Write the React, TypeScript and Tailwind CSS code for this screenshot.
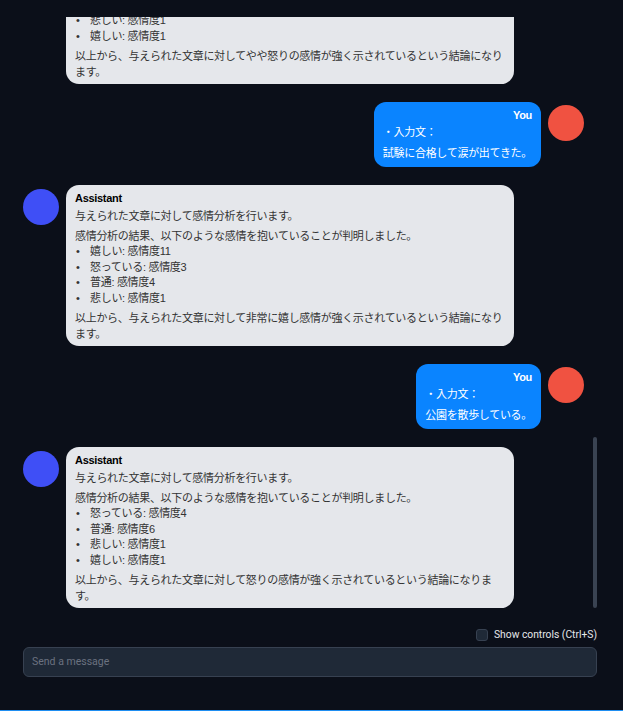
import React from "react";

const FONT = { fontFamily: '"Liberation Sans", "Noto Sans CJK JP", sans-serif' };

type Asst = { items: string[]; conclusion: string };

const AssistantMsg = ({ items, conclusion }: Asst) => (
  <div className="flex items-start gap-[7px]">
    <div className="mt-[4px] h-[36px] w-[36px] shrink-0 rounded-full bg-[#3f4ff6]" />
    <div className="max-w-[448px] rounded-[13px] bg-[#e5e7eb] px-[9px] pt-[5px] pb-[4px] text-[11px] leading-[16px] tracking-[-0.3px] text-[#333]">
      <div className="mb-[2px] font-bold text-black">Assistant</div>
      <p className="mb-[4px]">与えられた文章に対して感情分析を行います。</p>
      <p>感情分析の結果、以下のような感情を抱いていることが判明しました。</p>
      <ul className="mb-[4px]">
        {items.map((t) => (
          <li key={t} className="flex leading-[15.5px]">
            <span className="w-[15px] shrink-0 pl-[1px]">•</span>
            <span>{t}</span>
          </li>
        ))}
      </ul>
      <p>{conclusion}</p>
    </div>
  </div>
);

const UserMsg = ({ text }: { text: string }) => (
  <div className="flex items-start justify-end gap-[7px]">
    <div className="rounded-[12px] bg-[#0a84ff] px-[9px] pt-[5px] pb-[6px] text-[11px] leading-[16px] tracking-[-0.3px] text-white">
      <div className="text-right font-bold">You</div>
      <p className="mt-[1px]">・入力文：</p>
      <p className="mt-[5px]">{text}</p>
    </div>
    <div className="mt-[3px] h-[36px] w-[36px] shrink-0 rounded-full bg-[#f05241]" />
  </div>
);

export default function App() {
  return (
    <div className="flex h-[711px] w-full flex-col bg-[#0b0f19]" style={FONT}>
      <div className="h-[17px] shrink-0" />
      <div className="relative ml-[23px] mr-[26px] flex h-[595px] shrink-0 flex-col justify-end gap-[18px] overflow-hidden pr-[13px] pb-[4px]">
        <AssistantMsg
          items={["怒っている: 感情度5", "普通: 感情度3", "悲しい: 感情度1", "嬉しい: 感情度1"]}
          conclusion="以上から、与えられた文章に対してやや怒りの感情が強く示されているという結論になります。"
        />
        <UserMsg text="試験に合格して涙が出てきた。" />
        <AssistantMsg
          items={["嬉しい: 感情度11", "怒っている: 感情度3", "普通: 感情度4", "悲しい: 感情度1"]}
          conclusion="以上から、与えられた文章に対して非常に嬉し感情が強く示されているという結論になります。"
        />
        <UserMsg text="公園を散歩している。" />
        <AssistantMsg
          items={["怒っている: 感情度4", "普通: 感情度6", "悲しい: 感情度1", "嬉しい: 感情度1"]}
          conclusion="以上から、与えられた文章に対して怒りの感情が強く示されているという結論になります。"
        />
        <div className="absolute right-0 top-[420px] h-[171px] w-[4px] rounded-full bg-[#3a4352]" />
      </div>
      <div className="ml-[23px] mr-[26px] mt-[17px] flex h-[12px] items-center justify-end gap-[6px]">
        <div className="h-[12px] w-[12px] rounded-[3px] border border-[#374151] bg-[#1f2937]" />
        <span className="text-[10.3px] text-[#e5e7eb]" style={{ fontFamily: 'Roboto, "Liberation Sans", sans-serif' }}>
          Show controls (Ctrl+S)
        </span>
      </div>
      <div className="ml-[23px] mr-[26px] mt-[6px] flex h-[30px] items-center rounded-[6px] border border-[#374151] bg-[#1f2937] px-[8px]">
        <span className="text-[10.5px] text-[#6b7280]" style={{ fontFamily: 'Roboto, "Liberation Sans", sans-serif' }}>
          Send a message
        </span>
      </div>
      <div className="flex-1" />
      <div className="h-[1px] bg-[#1f8ef1]" />
    </div>
  );
}
